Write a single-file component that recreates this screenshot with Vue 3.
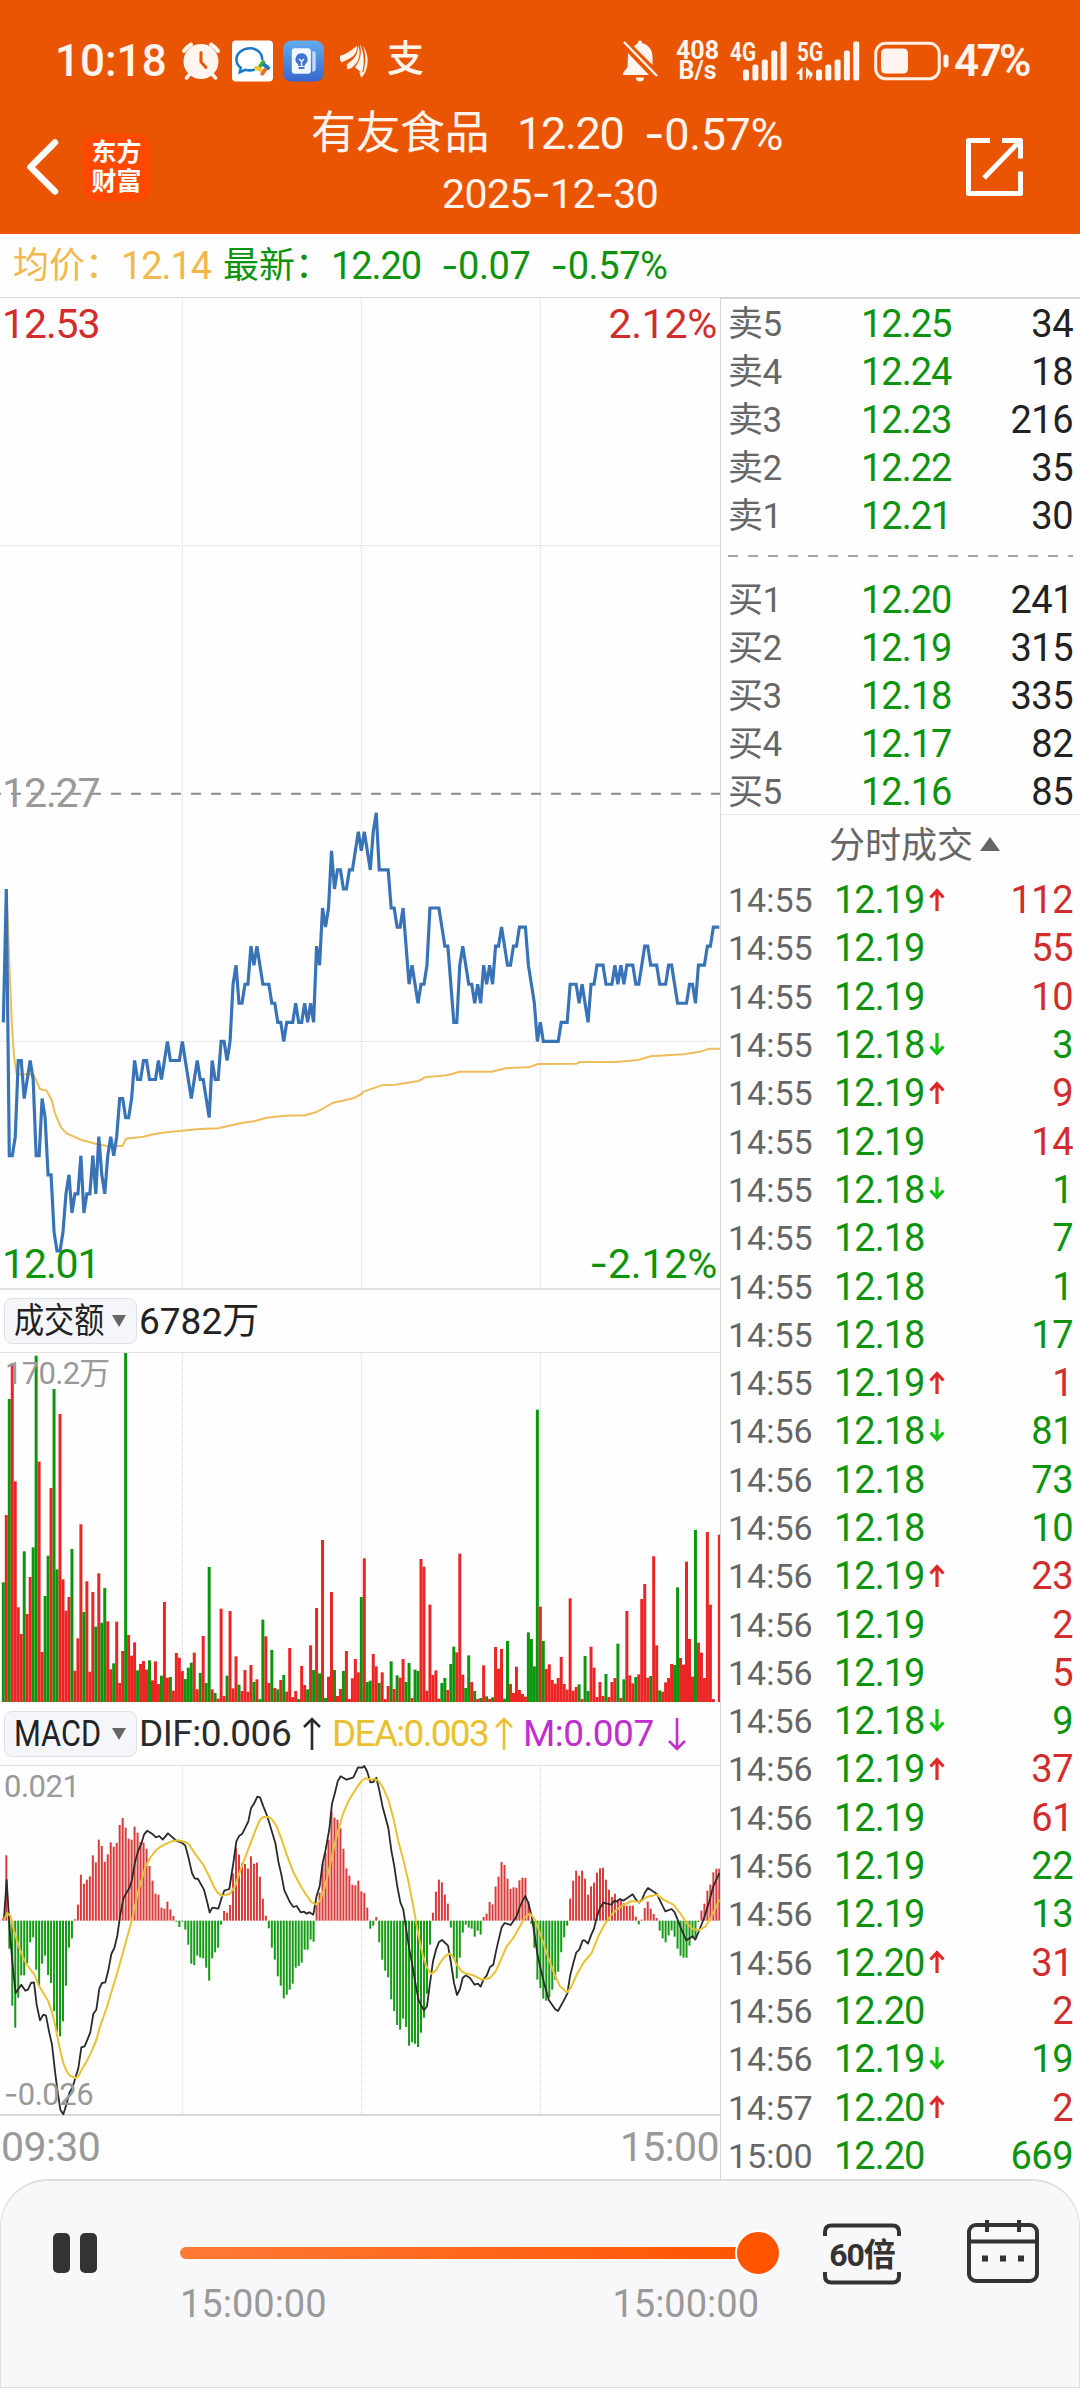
<template>
  <div class="page">
    <header class="top">
      <div class="status">
        <span class="clock">10:18</span>
        <svg class="ic-alarm" viewBox="0 0 38 38">
          <g fill="none" stroke="#fff5ee" stroke-linecap="round">
            <path d="M2 9A26 26 0 0 1 9 2.500M29 2.500A26 26 0 0 1 36 9" stroke-width="4" />
            <path d="M8 32L4.500 36M30 32L33.500 36" stroke-width="3.500" />
          </g>
          <circle cx="19" cy="19.500" r="17.500" fill="#fff5ee" />
          <path d="M19 10.500V20L24 25.500" fill="none" stroke="#ea5504" stroke-width="3" stroke-linecap="round" />
        </svg>
        <svg class="ic-app" viewBox="0 0 42 42">
          <rect width="42" height="42" rx="4" fill="#fff" />
          <path d="M31 20C31 13 26 8 18.500 8S4.500 13 4.500 19.500c0 4 2 6.500 4.500 8.500l-1 4.500 5.500-2.500c3 .8 7 .8 10-.5" fill="none" stroke="#1c7ac8" stroke-width="2.600" />
          <path d="M29 26l3-4" stroke="#45b035" stroke-width="4" stroke-linecap="round" />
          <path d="M33 25l4 3" stroke="#1c7ac8" stroke-width="4" stroke-linecap="round" />
          <path d="M34 30l-3 4" stroke="#ee6b31" stroke-width="4" stroke-linecap="round" />
          <path d="M29 30l-4-2" stroke="#f5c32c" stroke-width="4" stroke-linecap="round" />
        </svg>
        <svg class="ic-app ic-tip" viewBox="0 0 42 42">
          <defs>
            <linearGradient id="tipBg" x1="0" y1="0" x2="0" y2="1">
              <stop offset="0" stop-color="#62acf0" />
              <stop offset="1" stop-color="#3868cc" />
            </linearGradient>
          </defs>
          <rect width="42" height="42" rx="9" fill="url(#tipBg)" />
          <path d="M30 11h1.500q2 0 2 2v16q0 3-3.500 3z" fill="#c4dcfa" />
          <rect x="9" y="8" width="19.500" height="26" rx="3" fill="#f3f8ff" />
          <path d="M19 13a6.200 6.200 0 0 0-3.500 11.300V26h7v-1.700A6.200 6.200 0 0 0 19 13zM16 27.200h6v2h-6z" fill="#3e75d2" />
          <path d="M16.500 19l2.500 2.500 2.500-2.500M19 21.500V26" fill="none" stroke="#f3f8ff" stroke-width="1.400" />
        </svg>
        <svg class="ic-wing" viewBox="0 0 30 36">
          <path d="M0 12C6 11 12 6 17.500 2C18 8 15 12 10 15L1.500 19Q-1 15 0 12z" fill="#fff5ee" />
          <path d="M18.500 1C19 12 14 16 7 21L7.500 26Q11 26 15 22C20 17 22 9 18.500 1z" fill="#fff5ee" />
          <path d="M20.500 0C23 10 21 17 15.500 24L22.500 30C26 22 25 8 20.500 0z" fill="#fff5ee" />
          <path d="M23.500 2C27 9 27.500 21 22.500 34.500C27 30 29 22 28.500 15Q27.500 6 23.500 2zM20 29L22 35L24.500 29z" fill="#fff5ee" />
        </svg>
        <span class="pay">支</span>
        <svg class="ic-bell" viewBox="0 0 37 42">
          <path d="M16 1.500q2-2 4 0v1.500C27 5 30.500 10 30.500 17v8L12 6.500Q14 4 16 3zM6 13l21 22H1v-2l4.500-6zM14 37.500h8a4 4 0 0 1-8 0z" fill="#fff5ee" />
          <path d="M2 2L35 36" stroke="#fff5ee" stroke-width="2.400" />
        </svg>
        <span class="speed"><b>408</b><b>B/s</b></span>
        <svg class="ic-signal" viewBox="0 0 57 40">
          <text x="0" y="19.500" class="net" textLength="26" lengthAdjust="spacingAndGlyphs">4G</text>
          <rect v-for="(h, i) in [11, 16, 21, 30, 39]" :key="i" :x="13 + i * 9.400" :y="39.500 - h" width="6" :height="h" rx="2" fill="#fff5ee" />
        </svg>
        <svg class="ic-signal ic-5g" viewBox="0 0 64 40">
          <text x="1" y="19.500" class="net" textLength="26" lengthAdjust="spacingAndGlyphs">5G</text>
          <path d="M0 33L6.500 26V39H3.500V33zM10 26l7 7-3.500 6.500V33L10 39z" fill="#fff5ee" />
          <rect v-for="(h, i) in [11, 16, 21, 30, 39]" :key="i" :x="20 + i * 9.300" :y="39.500 - h" width="6" :height="h" rx="2" fill="#fff5ee" />
        </svg>
        <svg class="ic-battery" viewBox="0 0 75 40">
          <rect x="1.700" y="2.300" width="63.500" height="35.500" rx="10" fill="none" stroke="#fff0e4" stroke-width="3" />
          <rect x="7" y="7.500" width="27" height="25" rx="4.500" fill="#fff5ee" />
          <rect x="69.500" y="13.500" width="5" height="13" rx="2.500" fill="#fff5ee" />
        </svg>
        <span class="percent">47%</span>
      </div>
      <div class="nav">
        <svg class="back" viewBox="0 0 34 56">
          <path d="M29 3.500L4.500 28L29 52.500" fill="none" stroke="#fff" stroke-width="6.500" stroke-linecap="round" stroke-linejoin="round" />
        </svg>
        <div class="logo"><span>东方</span><span>财富</span></div>
        <div class="title">
          <div class="name">
            <span>有友食品</span>
            <span class="now">12.20</span>
            <span><i class="dash">-</i>0.57%</span>
          </div>
          <div class="date">2025<i class="dash">-</i>12<i class="dash">-</i>30</div>
        </div>
        <svg class="share" viewBox="0 0 58 60">
          <path d="M24 3.500H2.500V56.500H54.500V34.500M36 3.500H54.500V21.500M53 5L18 41" fill="none" stroke="#fff" stroke-width="5" stroke-linejoin="round" />
        </svg>
      </div>
    </header>

    <div class="summary">
      <span class="avg">均价：</span><span class="avg num">12.14</span>
      <span class="last">最新：</span><span class="num">12.20</span>
      <span class="num gap"><i class="dash">-</i>0.07</span>
      <span class="num gap"><i class="dash">-</i>0.57%</span>
    </div>

    <main class="main">
      <section class="charts">
        <div class="price-chart">
          <svg viewBox="0 -1449 2160 2979" preserveAspectRatio="none">
            <g class="grid">
              <path v-for="x in gridX" :key="x" :d="`M${x} -1449V1530`" />
              <path d="M0 -703H2160M0 784H2160" />
            </g>
            <path d="M-15 41H2160" class="base" />
            <polyline :points="averageLine" class="line average" />
            <polyline :points="priceLine" class="line price" />
          </svg>
          <span class="lab lt red">12.53</span>
          <span class="lab rt red">2.12%</span>
          <span class="lab mid">12.27</span>
          <span class="lab lb green">12.01</span>
          <span class="lab rb green"><i class="dash">-</i>2.12%</span>
        </div>

        <div class="bar-head">
          <button class="picker"><span class="cjk">成交额</span><i class="tri"></i></button>
          <span class="amount">6782万</span>
        </div>
        <div class="volume-chart">
          <svg viewBox="0 216 2160 1050" preserveAspectRatio="none">
            <g class="grid">
              <path v-for="x in gridX" :key="x" :d="`M${x} 216V1266`" />
            </g>
            <rect
              v-for="bar in volumeBars"
              :key="bar.x"
              :x="bar.x - 4.500"
              :y="bar.top"
              width="8.950"
              :height="1266 - bar.top"
              :class="bar.up ? 'up' : 'down'"
            />
          </svg>
          <span class="small vol-max">170.2万</span>
        </div>

        <div class="bar-head macd-head">
          <button class="picker"><span class="latin">MACD</span><i class="tri"></i></button>
          <span class="ind dif">DIF:0.006</span>
          <svg class="arr dif" viewBox="0 0 18 34"><path d="M9 33V2M1 10L9 2L17 10" /></svg>
          <span class="ind dea">DEA:0.003</span>
          <svg class="arr dea" viewBox="0 0 18 34"><path d="M9 33V2M1 10L9 2L17 10" /></svg>
          <span class="ind m">M:0.007</span>
          <svg class="arr m" viewBox="0 0 18 34"><path d="M9 1V32M1 24L9 32L17 24" /></svg>
        </div>
        <div class="macd-chart">
          <svg viewBox="0 196 2160 1050" preserveAspectRatio="none">
            <g class="grid">
              <path v-for="x in gridX" :key="x" :d="`M${x} 196V1245`" />
            </g>
            <rect
              v-for="bar in macdBars"
              :key="bar.x"
              :x="bar.x - 3"
              :y="Math.min(bar.tip, 663)"
              width="6"
              :height="Math.abs(bar.tip - 663)"
              :class="bar.tip < 663 ? 'pos' : 'neg'"
            />
            <polyline :points="difLine" class="line dif-line" />
            <polyline :points="deaLine" class="line dea-line" />
          </svg>
          <span class="small macd-max">0.021</span>
          <span class="small macd-min"><i class="dash">-</i>0.026</span>
        </div>
        <div class="axis"><span>09:30</span><span>15:00</span></div>
      </section>

      <aside class="book">
        <div v-for="row in sells" :key="row[0]" class="quote">
          <span>{{ row[0] }}</span><span>{{ row[1] }}</span><span>{{ row[2] }}</span>
        </div>
        <svg class="split" viewBox="0 0 345 2"><path d="M0 1H345" stroke="#888" stroke-width="1.500" stroke-dasharray="10 10" /></svg>
        <div v-for="row in buys" :key="row[0]" class="quote">
          <span>{{ row[0] }}</span><span>{{ row[1] }}</span><span>{{ row[2] }}</span>
        </div>
        <div class="ticks-title">分时成交<i></i></div>
        <div v-for="(t, i) in trades" :key="i" class="trade">
          <span class="time">{{ t[0] }}</span>
          <span class="deal">{{ t[1] }}</span>
          <span class="dir">
            <svg v-if="t[4]" viewBox="0 0 16 23" :class="t[4]">
              <path :d="t[4] === 'rise' ? 'M8 23V3M1.500 9.500L8 2.500L14.500 9.500' : 'M8 0V20M1.500 13.500L8 20.500L14.500 13.500'" />
            </svg>
          </span>
          <span class="qty" :class="t[3] === 'r' ? 'red' : 'green'">{{ t[2] }}</span>
        </div>
      </aside>
    </main>

    <footer class="player">
      <div class="pause"><i></i><i></i></div>
      <div class="progress">
        <div class="track"><i class="thumb"></i></div>
        <div class="times"><span>15:00:00</span><span>15:00:00</span></div>
      </div>
      <div class="rate">
        <svg viewBox="0 0 78 62">
          <path d="M2 13V9q0-6.500 6.500-6.500h61q6.500 0 6.500 6.500v4M2 49v4q0 6.500 6.500 6.500h61q6.500 0 6.500-6.500v-4" fill="none" stroke="#333" stroke-width="4" />
        </svg>
        <span>60倍</span>
      </div>
      <svg class="calendar" viewBox="0 0 72 64">
        <g fill="none" stroke="#333" stroke-width="4">
          <rect x="2" y="5" width="68" height="56" rx="7" />
          <path d="M2 21.500H70M20 0V12M52 0V12" />
          <path d="M15 38.500h6M33 38.500h6M51 38.500h6" stroke-width="6" />
        </g>
      </svg>
    </footer>
  </div>
</template>

<script setup>
const STEP = 8.95
const minuteX = (i) => 10 + i * STEP
const gridX = [547, 1084, 1621]

const toNumbers = (text) => text.trim().split(/\s+/).map(Number)

// second part of a curve is stored relative to x = 1050
const toLine = (first, second) => {
  const shifted = second
    .trim()
    .split(/\s+/)
    .map((p) => {
      const [x, y] = p.split(',').map(Number)
      return `${x + 1050},${y}`
    })
  return first.trim() + ' ' + shifted.join(' ')
}

// cents below the previous close, one value per minute
const priceTicks = toNumbers(`
  12 5 19 19 18 14 14 16 15 14 15 19 19 16 17 20 20 23 24 24 23 21 20 22 21 21 19 22 21 21
  19 21 18 20 21 19 18 19 18 16 16 17 17 16 14 15 15 14 14 15 15 15 14 15 14 13 14 14 14 14
  13 14 15 16 15 14 15 15 16 17 14 15 15 13 13 14 13 10 9 11 11 10 10 8 9 8 9 10 10 10
  11 11 12 12 13 12 12 12 11 12 12 11 12 11 12 8 9 6 7 6 3 5 4 4 5 5 4 4 3 2
  3 2 3 4 2 1 4 4 4 4 6 6 7 7 6 8 10 9 10 11 10 10 9 6 6 6 6 7 8 8
  10 12 12 9 8 9 10 10 11 10 11 9 10 9 10 8 8 7 8 9 9 8 8 7 7 7 9 10 11 13
  12 13 13 13 13 13 13 12 12 12 10 10 10 11 10 11 12 10 10 9 9 9 10 10 10 9 10 9 10 9
  9 9 10 10 9 8 8 9 9 9 10 10 10 9 9 10 11 11 11 11 10 10 11 9 9 9 8 8 7 7 7
`)
const priceLine = priceTicks.map((t, i) => `${minuteX(i)},${41 + t * 57.17}`).join(' ')

const averageLine = toLine(
  `20,340 30,600 36,740 42,830 50,883 100,883 120,927 140,932 155,960 165,1000 183,1042 200,1060 245,1080
  290,1092 320,1098 368,1098 378,1076 430,1070 460,1063 500,1057 545,1052 600,1047 655,1045 720,1030
  765,1023 800,1013 855,1007 915,1006 950,996 1000,968 1060,955 1084,942`,
  `40,935 95,916 135,914 205,903 225,892 290,886 330,875 425,875 470,864 535,862 565,852 680,851 690,846
  795,846 865,840 900,829 1000,823 1050,815 1080,806 1110,806`
)

// top edge of each minute bar, negative when the minute fell
const volumes = toNumbers(`
  -907 705 -357 250 604 982 1062 -814 1002 891 -802 -227 545 1116 -948 -827 624 -327 -868 402
  898 992 951 -807 1172 1075 733 -996 904 1175 936 -1040 880 -1028 -924 1024 1168 -1150 1025 1209
  1113 -219 1065 1127 1087 -1171 1152 1143 1169 -1141 1201 1144 1212 -1187 966 1193 -1191 1232 1119 1133
  1173 -1197 -1163 -1148 1118 1228 -1179 1068 -1209 -861 1228 -1239 1256 986 1248 -1187 993 1225 1129 -1214
  1233 1170 1235 1155 -1206 1198 -1257 -1019 1069 1209 -1110 1224 -1228 1200 -1185 1235 1104 1251 1233 -1257
  1158 1215 -1228 1096 -1170 984 -1180 780 -1254 1190 936 -1170 1248 1227 -1173 1113 1257 1195 1137 1177
  -951 835 -1206 -1202 1122 1159 -1209 1177 1257 1218 -1144 1227 -1186 1193 1137 -1206 -1149 1254 -1169 -1173
  837 860 1232 974 1185 1171 1256 -1209 -1194 1230 -1152 -1100 1117 821 1184 -1224 -1126 1206 -1233 1257
  -1254 1156 -1249 1257 -1252 1101 1166 1107 -1256 -1083 1212 1239 1160 1230 1242 1250 -1057 -1077 -1159 -389
  980 -1083 1167 1153 1200 1211 1194 1131 1212 1229 955 1232 1221 -1213 1257 -1128 -1233 1100 1163 1251
  1206 1248 -1182 1251 1206 1194 -1091 1254 -1198 993 1186 1210 -1191 1183 957 912 1193 -1188 829 1096
  -1231 1235 1207 1194 1152 -1155 -922 1134 1154 845 1077 1190 -750 1088 1118 1194 756 974 1257 1266 764
`)
const volumeBars = volumes.map((v, i) => ({ x: minuteX(i), top: Math.abs(v), up: v > 0 }))

const macdTips = toNumbers(`
  655 467 747 918 984 894 827 827 790 728 713 810 857 792 768 826 850 934 995 1010
  965 858 744 716 659 615 525 552 540 530 467 488 420 439 486 464 428 441 430 376
  355 384 417 420 381 399 427 429 447 499 543 582 585 624 627 606 629 649 666 682
  666 690 735 792 796 768 774 776 804 843 776 758 744 675 634 639 616 521 444 465
  491 493 507 470 492 489 531 597 648 686 744 780 830 858 896 885 870 852 804 799
  789 750 750 720 726 609 579 492 459 420 335 354 360 386 447 506 528 555 557 543
  575 580 624 687 678 652 728 780 813 833 899 934 976 990 957 982 1038 1028 1032 1042
  999 954 882 735 639 576 540 548 585 612 684 775 836 774 699 675 684 687 711 693
  705 652 642 607 614 561 531 487 496 537 568 563 564 542 534 535 605 672 744 840
  865 897 903 893 870 840 816 758 713 678 597 543 513 528 513 537 585 560 549 519
  506 504 540 570 592 582 600 600 610 618 618 618 651 674 660 625 606 627 643 655
  693 716 728 707 692 711 747 768 774 774 738 716 712 667 633 612 573 555 518 507 507
`)
const macdBars = macdTips.map((tip, i) => ({ x: minuteX(i), tip }))

const difLine = toLine(
  `12,655 20,541 29,690 38,798 47,880 64,855 76,873 84,870 93,850 102,848 110,915 120,962 130,945 138,948
  147,995 156,1035 165,1115 172,1170 181,1230 190,1244 199,1215 208,1180 218,1162 226,1135 235,1106 244,1043
  254,1040 271,998 280,942 289,930 298,867 306,850 316,848 325,812 334,763 343,745 352,708 360,650 370,597
  380,578 388,566 396,540 405,487 415,452 424,432 432,405 442,393 456,402 468,413 478,409 488,420 504,401
  530,424 547,430 556,438 566,476 576,520 584,536 594,538 612,570 621,605 629,639 637,624 655,627 664,597
  673,573 688,568 700,490 709,425 718,408 727,402 745,365 753,326 763,310 772,291 780,293 790,320 800,345
  808,370 826,430 835,485 844,525 853,572 870,608 880,622 890,619 902,638 912,636 920,642 928,638 940,645
  950,588 959,560 968,490 977,450 988,388 996,312 1004,283 1013,245 1022,230 1040,240 1060,233 1074,203 1086,204`,
  `43,199 52,217 61,248 70,247 79,234 88,272 98,322 115,385 124,452 133,500 141,555 151,608 160,630 168,685
  178,750 187,795 196,850 206,902 222,932 231,920 240,850 249,785 258,750 267,727 276,721 294,738 303,790
  312,850 321,886 330,868 338,835 347,827 360,835 374,855 384,852 392,861 401,838 410,828 420,802 430,795
  438,755 446,720 455,683 464,670 482,676 500,650 508,625 518,603 526,589 535,610 545,650 553,700 562,762
  572,808 582,850 597,902 615,928 624,934 640,905 652,882 660,830 670,790 679,758 688,750 698,722 704,722
  714,732 724,705 732,687 741,650 750,625 760,609 784,615 793,603 800,606 810,598 820,603 848,584 858,600
  868,609 876,600 884,580 894,565 920,582 930,603 946,635 965,628 974,638 983,660 992,684 1009,722 1028,710
  1036,720 1054,676 1064,650 1078,605 1090,560 1108,520`
)

const deaLine = toLine(
  `12,660 22,640 32,650 40,685 50,720 60,750 72,780 84,800 104,826 115,855 130,880 145,905 155,935 163,965
  172,1010 181,1055 190,1090 200,1115 210,1128 225,1135 235,1130 245,1110 260,1085 275,1055 290,1018 300,980
  320,925 335,875 350,825 370,755 385,700 400,645 412,585 425,540 437,500 450,475 465,455 480,442 500,432
  515,425 535,422 555,427 566,432 575,447 585,462 610,496 625,525 640,558 652,578 665,588 690,582 705,560
  720,515 735,475 750,435 765,395 780,360 790,352 805,352 815,358 830,380 845,420 860,465 880,518 900,555
  920,588 935,608 950,615 962,600 975,560 985,520 1000,450 1015,390 1030,340 1045,305 1060,280 1075,257 1084,245`,
  `45,236 66,240 72,238 85,243 98,262 115,300 130,355 145,425 160,480 175,545 190,620 205,705 218,765 230,802
  243,823 258,812 270,790 285,770 297,762 307,768 320,795 335,815 350,822 370,827 395,840 420,835 437,815
  455,775 470,740 490,715 510,680 525,652 540,642 555,660 575,715 595,775 615,828 630,860 650,878 662,865
  680,825 700,790 725,760 745,710 765,672 785,645 800,630 820,616 845,604 870,607 890,592 920,585 940,600
  970,615 990,640 1010,670 1028,688 1045,692 1065,682 1080,660 1095,628 1108,600`
)

const sells = [
  ['卖5', '12.25', 34],
  ['卖4', '12.24', 18],
  ['卖3', '12.23', 216],
  ['卖2', '12.22', 35],
  ['卖1', '12.21', 30],
]
const buys = [
  ['买1', '12.20', 241],
  ['买2', '12.19', 315],
  ['买3', '12.18', 335],
  ['买4', '12.17', 82],
  ['买5', '12.16', 85],
]

const trades = [
  ['14:55', '12.19', 112, 'r', 'rise'],
  ['14:55', '12.19', 55, 'r'],
  ['14:55', '12.19', 10, 'r'],
  ['14:55', '12.18', 3, 'g', 'fall'],
  ['14:55', '12.19', 9, 'r', 'rise'],
  ['14:55', '12.19', 14, 'r'],
  ['14:55', '12.18', 1, 'g', 'fall'],
  ['14:55', '12.18', 7, 'g'],
  ['14:55', '12.18', 1, 'g'],
  ['14:55', '12.18', 17, 'g'],
  ['14:55', '12.19', 1, 'r', 'rise'],
  ['14:56', '12.18', 81, 'g', 'fall'],
  ['14:56', '12.18', 73, 'g'],
  ['14:56', '12.18', 10, 'g'],
  ['14:56', '12.19', 23, 'r', 'rise'],
  ['14:56', '12.19', 2, 'r'],
  ['14:56', '12.19', 5, 'r'],
  ['14:56', '12.18', 9, 'g', 'fall'],
  ['14:56', '12.19', 37, 'r', 'rise'],
  ['14:56', '12.19', 61, 'r'],
  ['14:56', '12.19', 22, 'g'],
  ['14:56', '12.19', 13, 'g'],
  ['14:56', '12.20', 31, 'r', 'rise'],
  ['14:56', '12.20', 2, 'r'],
  ['14:56', '12.19', 19, 'g', 'fall'],
  ['14:57', '12.20', 2, 'r', 'rise'],
  ['15:00', '12.20', 669, 'g'],
]
</script>

<style>
body {
  margin: 0;
  background: #fff;
}
</style>

<style scoped>
.page {
  width: 1080px;
  height: 2388px;
  display: flex;
  flex-direction: column;
  overflow: hidden;
  background: #fefefe;
  color: #222;
  font-family: Roboto, 'Noto Sans CJK SC', sans-serif;
  line-height: 1;
  white-space: nowrap;
}

svg {
  display: block;
  flex: none;
}

i {
  font-style: normal;
}

/* wider hyphen than the one in Roboto */
.dash {
  font-family: Inter, sans-serif;
}

.red {
  color: #d22c2c;
}

.green {
  color: #0d930d;
}

/* header */
.top {
  height: 234px;
  flex: none;
  box-sizing: border-box;
  padding-top: 36px;
  background: #ea5504;
  color: #fff5ee;
}

.status {
  height: 50px;
  display: flex;
  align-items: center;
  padding-left: 55px;
}

.clock {
  width: 127px;
  font-size: 44px;
  font-weight: 500;
}

.ic-alarm {
  width: 38px;
  height: 38px;
}

.ic-app {
  width: 41px;
  height: 42px;
  margin-left: 12px;
}

.ic-tip {
  margin-left: 10px;
}

.ic-wing {
  width: 29px;
  height: 35px;
  margin-left: 16px;
}

.pay {
  width: 40px;
  margin: -4px 195px 0 18px;
  font-size: 37px;
  font-weight: 500;
}

.ic-bell {
  width: 37px;
  height: 42px;
}

.speed {
  display: flex;
  flex-direction: column;
  width: 45px;
  margin-left: 16px;
  align-items: center;
  font-size: 25px;
  line-height: 20.5px;
}

.ic-signal {
  width: 57px;
  height: 40px;
  margin-left: 10px;
  overflow: visible;
}

.ic-5g {
  width: 64px;
  margin-left: 9px;
}

.net {
  font-size: 25px;
  font-weight: 700;
  fill: #fff5ee;
}

.ic-battery {
  width: 75px;
  height: 40px;
  margin-left: 14px;
}

.percent {
  margin-left: 5px;
  font-size: 44px;
  font-weight: 600;
  letter-spacing: -2.6px;
}

.nav {
  height: 134px;
  display: flex;
  align-items: center;
  margin-top: 14px;
}

.back {
  width: 34px;
  height: 56px;
  margin: -1px 0 0 26px;
}

.logo {
  width: 67px;
  height: 67px;
  display: flex;
  flex-direction: column;
  align-items: center;
  justify-content: center;
  margin-left: 23px;
  border-radius: 14px;
  background: #ff4800;
  color: #fff;
  font-size: 25px;
  font-weight: 700;
  line-height: 29px;
}

.title {
  width: 480px;
  margin: -9px 0 0 161px;
}

.name {
  display: flex;
  height: 60px;
  align-items: center;
  font-size: 45px;
  letter-spacing: -1.3px;
}

.name span:first-child {
  width: 205px;
  font-size: 45px;
  letter-spacing: -0.5px;
}

.name .now {
  width: 127px;
  padding-left: 1px;
}

.name span:last-child {
  letter-spacing: -0.4px;
}

.date {
  height: 58px;
  padding-left: 131px;
  font-size: 41px;
  line-height: 58px;
  letter-spacing: -0.6px;
}

.share {
  width: 58px;
  height: 60px;
  margin-left: 175px;
}

/* summary line */
.summary {
  height: 63px;
  flex: none;
  display: flex;
  align-items: center;
  padding-left: 13px;
  color: #0d930d;
  font-size: 36px;
}

.summary .avg {
  color: #f2b84c;
}

.summary .num {
  font-size: 38px;
  letter-spacing: -1.1px;
}

.summary .last {
  margin-left: 12px;
}

.summary .gap {
  margin-left: 20px;
  letter-spacing: -0.4px;
}

/* charts */
.main {
  display: flex;
  flex: 1;
  min-height: 0;
}

.charts {
  width: 720px;
  flex: none;
}

.price-chart,
.volume-chart,
.macd-chart {
  position: relative;
  box-sizing: border-box;
}

.price-chart {
  height: 993px;
  border-top: 1px solid #d5d7da;
  border-bottom: 2px solid #e0e0e0;
}

.charts .price-chart svg {
  width: 720px;
  height: 993px;
  margin-top: -1px;
}

.grid path {
  fill: none;
  stroke: #d4d4d4;
  stroke-width: 3;
  stroke-dasharray: 4 4;
}

.base {
  stroke: #8c8c8c;
  stroke-width: 6;
  stroke-dasharray: 30 30;
  stroke-dashoffset: 12;
}

.line {
  fill: none;
  stroke-linejoin: round;
}

.price {
  stroke: #3873b8;
  stroke-width: 9.5;
  stroke-linejoin: miter;
  stroke-miterlimit: 1.5;
}

.average {
  stroke: #efbc5a;
  stroke-width: 6;
}

.lab {
  position: absolute;
  font-size: 41px;
  line-height: 44px;
  letter-spacing: -1.1px;
}

.lt {
  left: 2px;
  top: 4px;
}

.rt {
  right: 3px;
  top: 4px;
  letter-spacing: -0.3px;
}

.mid {
  left: 2px;
  top: 473px;
  color: #999;
}

.lb {
  left: 2px;
  bottom: 2px;
}

.rb {
  right: 3px;
  bottom: 2px;
  letter-spacing: -0.2px;
}

.bar-head {
  height: 62px;
  display: flex;
  align-items: center;
  padding-left: 4px;
}

.picker {
  width: 133px;
  height: 46px;
  flex: none;
  box-sizing: border-box;
  display: flex;
  align-items: center;
  padding: 0 8px 0 9px;
  border: 1px solid #dfe1e8;
  border-radius: 8px;
  background: #f5f6fa;
  color: #222;
  font: inherit;
}

.picker span {
  width: 98px;
  flex: none;
  text-align: left;
  font-size: 35px;
  transform: scaleX(0.86);
  transform-origin: left;
}

.picker .latin {
  font-size: 37px;
  transform: scaleX(0.83);
}

.tri {
  width: 0;
  height: 0;
  border: 7.5px solid transparent;
  border-top: 12px solid #666;
  border-bottom: 0;
}

.amount {
  margin-left: 2px;
  font-size: 37px;
}

.volume-chart {
  height: 350px;
  border-top: 1px solid #e0e0e0;
}

.volume-chart svg,
.macd-chart svg {
  width: 720px;
  height: 350px;
  margin-top: -1px;
}

.up {
  fill: #ec2424;
}

.down {
  fill: #0c960c;
}

.small {
  position: absolute;
  left: 4px;
  color: #999;
  font-size: 31px;
  line-height: 34px;
  letter-spacing: -0.5px;
}

.vol-max {
  top: 4px;
  left: 5px;
  letter-spacing: -0.7px;
}

.macd-head {
  height: 63px;
}

.ind {
  font-size: 37px;
  letter-spacing: -0.5px;
}

.arr {
  width: 18px;
  height: 34px;
  fill: none;
  stroke: currentColor;
  stroke-width: 2.6;
}

.dif {
  color: #2b2b2b;
}

.ind.dif {
  width: 164px;
  margin-left: 2px;
}

.dea {
  color: #e9c12f;
}

.ind.dea {
  width: 163px;
  margin-left: 11px;
  letter-spacing: -1.7px;
}

.m {
  color: #c02fcc;
}

.ind.m {
  width: 145px;
  margin-left: 10px;
}

.macd-chart {
  height: 351px;
  border-top: 1px solid #e0e0e0;
  border-bottom: 2px solid #d8d8d8;
}

.pos {
  fill: #d93a3a;
}

.neg {
  fill: #149a14;
}

.dif-line {
  stroke: #2a2a2a;
  stroke-width: 5.4;
}

.dea-line {
  stroke: #e8c233;
  stroke-width: 6;
}

.macd-max {
  top: 4px;
}

.macd-min {
  bottom: 2px;
}

.axis {
  display: flex;
  justify-content: space-between;
  padding: 9px 1px 0;
  color: #999;
  font-size: 41px;
  line-height: 44px;
  letter-spacing: -0.6px;
}

/* order book */
.book {
  flex: 1;
  box-sizing: border-box;
  height: 1882px;
  padding: 1px 8px 0 7px;
  border-top: 2px solid #d5d7da;
  border-left: 1px solid #d5d7da;
}

.quote {
  height: 48px;
  display: flex;
  align-items: center;
  font-size: 38px;
  color: #222;
}

.quote span:first-child {
  width: 133px;
  color: #666;
  font-size: 35px;
  letter-spacing: -0.6px;
}

.quote span:nth-child(2) {
  color: #0d930d;
  letter-spacing: -1px;
}

.quote span:last-child {
  margin-left: auto;
  letter-spacing: -0.5px;
}

.split {
  width: 345px;
  height: 2px;
  margin: 15px 0 19px;
}

.ticks-title {
  height: 62px;
  display: flex;
  align-items: center;
  box-sizing: border-box;
  margin: -2px -8px 0 -7px;
  padding-left: 108px;
  border-top: 1px solid #e8e8e8;
  color: #666;
  font-size: 36px;
}

.ticks-title i {
  margin: -3px 0 0 7px;
  border: 10.5px solid transparent;
  border-top: 0;
  border-bottom: 14px solid #666;
}

.trade {
  height: 48.3px;
  display: flex;
  align-items: center;
  font-size: 38px;
}

.time {
  width: 106px;
  color: #666;
  font-size: 34px;
}

.deal {
  width: 95px;
  color: #0d930d;
  letter-spacing: -1px;
}

.dir svg {
  width: 16px;
  height: 23px;
  margin-top: -2px;
  fill: none;
  stroke: #df2727;
  stroke-width: 3.2;
}

.dir svg.fall {
  stroke: #12c012;
}

.qty {
  margin-left: auto;
  letter-spacing: -0.5px;
}

/* replay controls */
.player {
  height: 209px;
  flex: none;
  box-sizing: border-box;
  display: flex;
  align-items: flex-start;
  border: 1px solid #dedede;
  border-top-width: 2px;
  border-radius: 48px 48px 0 0;
  background: #f8f8fb;
}

.pause {
  display: flex;
  gap: 10px;
  margin: 52px 0 0 52px;
}

.pause i {
  width: 17px;
  height: 40px;
  border-radius: 5px;
  background: #333;
}

.progress {
  width: 580px;
  margin: 66px 0 0 83px;
}

.track {
  position: relative;
  width: 576px;
  height: 12px;
  border-radius: 6px;
  background: linear-gradient(90deg, #ff7a36, #ff5400);
}

.thumb {
  position: absolute;
  right: -25px;
  top: -17px;
  width: 42px;
  height: 42px;
  border: 2px solid #fff;
  border-radius: 50%;
  background: #ff5500;
}

.times {
  width: 579px;
  display: flex;
  justify-content: space-between;
  padding-top: 27px;
  color: #999;
  font-size: 38px;
  line-height: 36px;
}

.rate {
  position: relative;
  width: 78px;
  height: 62px;
  margin: 42px 0 0 63px;
}

.rate span {
  position: absolute;
  inset: 0;
  color: #333;
  text-align: center;
  font-size: 32px;
  font-weight: 700;
  line-height: 64px;
  letter-spacing: -1px;
}

.calendar {
  width: 72px;
  height: 64px;
  margin: 39px 0 0 66px;
}
</style>
